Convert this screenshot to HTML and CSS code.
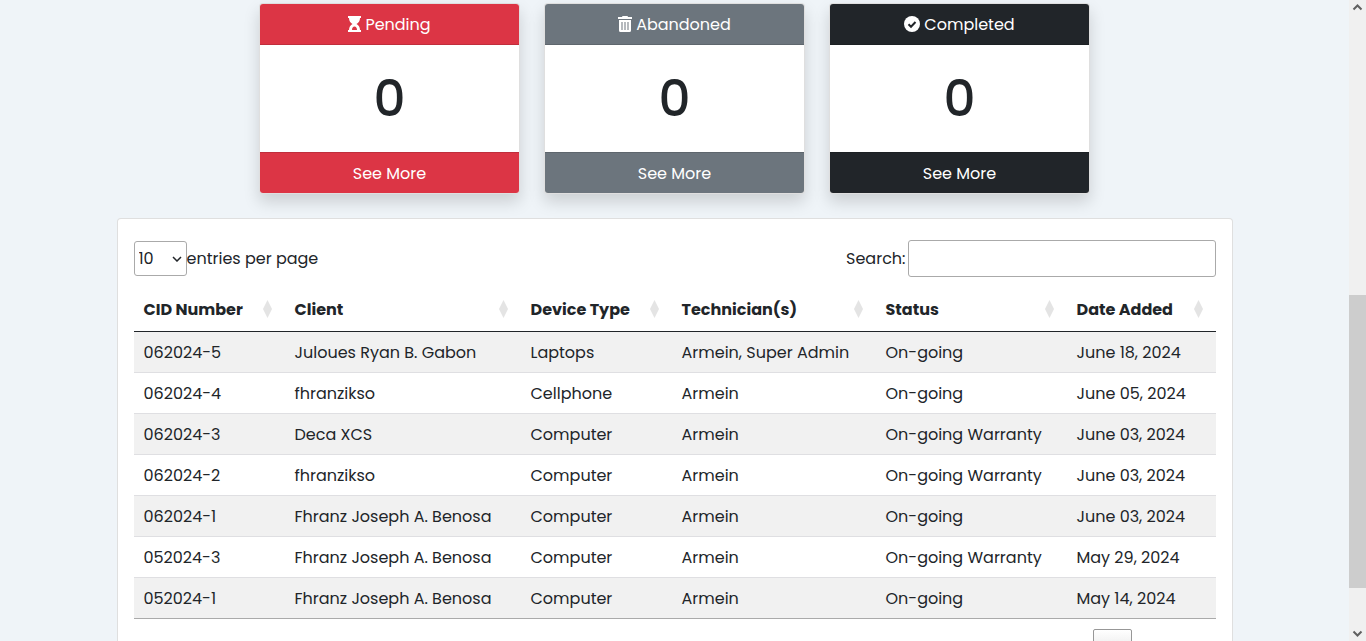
FILE: index.html
```html
<!DOCTYPE html>
<html lang="en">
<head>
<meta charset="utf-8">
<title>Dashboard</title>
<link rel="stylesheet" href="styles.css">
</head>
<body>
<div class="shell">
  <main class="page">
    <section class="cards">
      <article class="card card-danger">
        <header class="card-bar card-head">
          <svg class="icon" width="13" height="16" viewBox="0 0 13 16" aria-hidden="true"><path fill-rule="evenodd" d="M0 0h13v2h-1c0 3-1.500 5-3.500 6 2 1 3.500 3 3.500 6h1v2H0v-2h1c0-3 1.500-5 3.500-6C2.500 7 1 5 1 2H0zM4 14h5c0-2-1-3.500-2.500-3.500S4 12 4 14z"/></svg>
          Pending
        </header>
        <div class="card-count">0</div>
        <a class="card-bar card-foot" href="#pending">See More</a>
      </article>
      <article class="card card-muted">
        <header class="card-bar card-head">
          <svg class="icon" width="14" height="16" viewBox="0 0 14 16" aria-hidden="true"><path fill-rule="evenodd" d="M0 1h4l.5-1h5l.5 1h4v2H0zM1 4h12v10.500a1.500 1.500 0 0 1-1.500 1.500h-9A1.500 1.500 0 0 1 1 14.500zM3.500 6v8h1V6zM6.500 6v8h1V6zM9.500 6v8h1V6z"/></svg>
          Abandoned
        </header>
        <div class="card-count">0</div>
        <a class="card-bar card-foot" href="#abandoned">See More</a>
      </article>
      <article class="card card-dark">
        <header class="card-bar card-head">
          <svg class="icon" width="16" height="16" viewBox="0 0 16 16" aria-hidden="true"><circle cx="8" cy="8" r="8"/><path class="check" d="M4.500 8.200l2.500 2.500 4.500-4.700"/></svg>
          Completed
        </header>
        <div class="card-count">0</div>
        <a class="card-bar card-foot" href="#completed">See More</a>
      </article>
    </section>

    <section class="panel">
      <div class="toolbar">
        <div class="length">
          <span class="select-wrap">
            <select id="length" class="length-select"><option>10</option></select>
            <svg class="chevron" width="10" height="6" viewBox="0 0 10 6" aria-hidden="true"><path d="M1 1l4 4 4-4"/></svg>
          </span>
          <label for="length">entries per page</label>
        </div>
        <div class="search">
          <label for="search">Search:</label>
          <input id="search" class="search-input" type="search">
        </div>
      </div>

      <table class="grid">
        <colgroup>
          <col class="col-cid"><col class="col-client"><col class="col-device"><col class="col-tech"><col class="col-status"><col class="col-date">
        </colgroup>
        <thead>
          <tr>
            <th><div class="th">CID Number <svg class="sort" width="9" height="18" viewBox="0 0 9 18" aria-hidden="true"><path d="M4.500 0L9 9l-4.500 9L0 9z"/></svg></div></th>
            <th><div class="th">Client <svg class="sort" width="9" height="18" viewBox="0 0 9 18" aria-hidden="true"><path d="M4.500 0L9 9l-4.500 9L0 9z"/></svg></div></th>
            <th><div class="th">Device Type <svg class="sort" width="9" height="18" viewBox="0 0 9 18" aria-hidden="true"><path d="M4.500 0L9 9l-4.500 9L0 9z"/></svg></div></th>
            <th><div class="th">Technician(s) <svg class="sort" width="9" height="18" viewBox="0 0 9 18" aria-hidden="true"><path d="M4.500 0L9 9l-4.500 9L0 9z"/></svg></div></th>
            <th><div class="th">Status <svg class="sort" width="9" height="18" viewBox="0 0 9 18" aria-hidden="true"><path d="M4.500 0L9 9l-4.500 9L0 9z"/></svg></div></th>
            <th><div class="th">Date Added <svg class="sort" width="9" height="18" viewBox="0 0 9 18" aria-hidden="true"><path d="M4.500 0L9 9l-4.500 9L0 9z"/></svg></div></th>
          </tr>
        </thead>
        <tbody>
          <tr><td>062024-5</td><td>Juloues Ryan B. Gabon</td><td>Laptops</td><td>Armein, Super Admin</td><td>On-going</td><td>June 18, 2024</td></tr>
          <tr><td>062024-4</td><td>fhranzikso</td><td>Cellphone</td><td>Armein</td><td>On-going</td><td>June 05, 2024</td></tr>
          <tr><td>062024-3</td><td>Deca XCS</td><td>Computer</td><td>Armein</td><td>On-going Warranty</td><td>June 03, 2024</td></tr>
          <tr><td>062024-2</td><td>fhranzikso</td><td>Computer</td><td>Armein</td><td>On-going Warranty</td><td>June 03, 2024</td></tr>
          <tr><td>062024-1</td><td>Fhranz Joseph A. Benosa</td><td>Computer</td><td>Armein</td><td>On-going</td><td>June 03, 2024</td></tr>
          <tr><td>052024-3</td><td>Fhranz Joseph A. Benosa</td><td>Computer</td><td>Armein</td><td>On-going Warranty</td><td>May 29, 2024</td></tr>
          <tr><td>052024-1</td><td>Fhranz Joseph A. Benosa</td><td>Computer</td><td>Armein</td><td>On-going</td><td>May 14, 2024</td></tr>
        </tbody>
      </table>

      <nav class="pager" aria-label="Pages">
        <button class="pager-button" type="button" aria-label="Page 1"></button>
      </nav>
    </section>
  </main>

  <div class="scrollbar" aria-hidden="true">
    <svg class="scroll-arrow" width="17" height="17" viewBox="0 0 17 17"><path d="M4.500 9.500l4-4 4 4"/></svg>
    <div class="scroll-before"></div>
    <div class="scroll-thumb"></div>
    <div class="scroll-after"></div>
    <svg class="scroll-arrow" width="17" height="17" viewBox="0 0 17 17"><path d="M4.500 7.500l4 4 4-4"/></svg>
  </div>
</div>
</body>
</html>
```

FILE: styles.css
```css
* { box-sizing: border-box; }

body {
  margin: 0;
  background: #eff4f8;
  color: #212529;
  font-family: "Poppins", "Inter", sans-serif;
  font-size: 16px;
  line-height: 24px;
}

.shell {
  display: flex;
  height: 100vh;
  overflow: hidden;
}

.page {
  flex: 1;
  min-width: 0;
  padding-top: 3px;
  overflow: hidden;
}

.cards {
  display: flex;
  justify-content: center;
  gap: 24px;
  margin-bottom: 24px;
}

.card {
  flex: 0 1 261px;
  display: flex;
  flex-direction: column;
  border: 1px solid rgba(0, 0, 0, .125);
  border-radius: 4px;
  background: #fff;
  box-shadow: 0 8px 16px rgba(0, 0, 0, .15);
  text-align: center;
}

.card-bar {
  display: flex;
  align-items: center;
  justify-content: center;
  gap: 4px;
  padding: 8px 16px 6px;
  color: #fff;
  line-height: 26px;
  text-decoration: none;
}

.card-head {
  border-bottom: 1px solid rgba(0, 0, 0, .125);
  border-radius: 3px 3px 0 0;
}

.card-foot {
  border-top: 1px solid rgba(0, 0, 0, .125);
  border-radius: 0 0 3px 3px;
}

.card-danger .card-bar { background-color: #dc3545; }
.card-muted .card-bar { background-color: #6c757d; }
.card-dark .card-bar { background-color: #212529; }

.icon {
  margin-bottom: 2px;
  fill: currentColor;
}

.check {
  fill: none;
  stroke: #212529;
  stroke-width: 2;
}

.card-count {
  padding: 16px;
  font-size: 50px;
  font-weight: 500;
  line-height: 75px;
}

.panel {
  max-width: 1116px;
  margin: 0 auto;
  padding: 21px 16px 24px;
  border: 1px solid rgba(0, 0, 0, .125);
  border-radius: 4px;
  background: #fff;
}

.toolbar,
.length,
.search {
  display: flex;
  align-items: center;
}

.toolbar {
  justify-content: space-between;
  margin-bottom: 10px;
}

.search { gap: 2px; }

.select-wrap {
  display: grid;
  align-items: center;
}

.length-select,
.chevron { grid-area: 1 / 1; }

.length-select,
.search-input {
  border: 1px solid #aaa;
  border-radius: 3px;
  background: transparent;
  color: inherit;
  font: inherit;
  appearance: none;
}

.length-select {
  width: 53px;
  height: 35px;
  padding: 4px;
}

.chevron {
  justify-self: end;
  margin-right: 5px;
  fill: none;
  stroke: #212529;
  stroke-width: 1.5;
  pointer-events: none;
}

.search-input {
  width: 308px;
  height: 37px;
  padding: 5px;
}

.grid {
  width: 100%;
  table-layout: fixed;
  border-collapse: separate;
  border-spacing: 0;
  border-bottom: 1px solid #aaa;
}

.col-cid { width: 151px; }
.col-client { width: 236px; }
.col-device { width: 151px; }
.col-tech { width: 204px; }
.col-status { width: 191px; }
.col-date { width: 149px; }

.grid th {
  padding: 10px 13px 8px 10px;
  border-bottom: 1px solid #212529;
  font-weight: 700;
  line-height: 26px;
  text-align: left;
  white-space: nowrap;
}

.th {
  display: flex;
  align-items: center;
  justify-content: space-between;
}

.sort {
  margin-bottom: 2px;
  fill: #e4e4e4;
}

.grid td {
  padding: 9px 10px 7px;
  border-bottom: 1px solid #dfdfe2;
  white-space: nowrap;
}

.grid tbody tr:nth-child(odd) { background: #f1f1f1; }
.grid tbody tr:last-child td { border-bottom: 0; }

.pager {
  display: flex;
  justify-content: flex-end;
  padding: 10px 84px 0 0;
}

.pager-button {
  width: 39px;
  height: 36px;
  border: 1px solid #979797;
  border-radius: 2px;
  background: linear-gradient(#fff, #dcdcdc);
}

.scrollbar {
  flex: 0 0 17px;
  display: flex;
  flex-direction: column;
  background: #f0f0f0;
}

.scroll-before { flex: 278; }
.scroll-thumb { flex: 293; background: #cdcdcd; }
.scroll-after { flex: 36; }

.scroll-arrow {
  fill: none;
  stroke: #606060;
  stroke-width: 2;
}
```
